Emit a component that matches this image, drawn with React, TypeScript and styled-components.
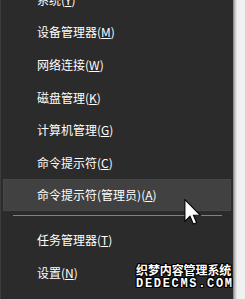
import React from 'react';
import styled, { createGlobalStyle } from 'styled-components';

const GlobalStyle = createGlobalStyle`
  html, body {
    margin: 0;
    padding: 0;
    background: #f0f0f0;
    overflow: hidden;
  }
  body {
    font-family: "Noto Sans CJK SC", "Noto Sans", sans-serif;
  }
`;

const Screen = styled.div`
  position: relative;
  width: 245px;
  height: 299px;
  overflow: hidden;
  background: #f0f0f0;
`;

const Menu = styled.div`
  width: 232px;
  margin-top: -17px;
  padding: 0 0 40px 0;
  background: #2b2b2b;
  border-left: 1px solid #3c3c3c;
  border-right: 1px solid #8e8e8e;
  box-shadow: 1px 0 0 #b4b4b4, 2px 0 0 #cdcdcd, 3px 0 0 #e1e1e1;
  display: flex;
  flex-direction: column;
`;

const Item = styled.div<{ $active?: boolean }>`
  height: 32.6px;
  box-sizing: border-box;
  margin: 0 2px 0 2px;
  padding-left: 33px;
  display: flex;
  align-items: center;
  color: #ffffff;
  font-size: 12px;
  white-space: nowrap;
  background: ${(p) => (p.$active ? '#414141' : 'transparent')};
  border: 1px solid ${(p) => (p.$active ? '#474747' : 'transparent')};
`;

const Key = styled.span`
  text-decoration: underline;
  text-underline-offset: 1px;
`;

const Separator = styled.div`
  height: 12.4px;
  display: flex;
  padding: 4px 11px 0 12px;
  box-sizing: border-box;
  &::before {
    content: '';
    flex: 1;
    height: 1px;
    background: #828282;
  }
`;

const Cursor = styled.svg`
  position: absolute;
  left: 184px;
  top: 199px;
`;

const Watermark = styled.div`
  position: absolute;
  left: 136px;
  top: 264px;
  width: 97px;
  color: #ffffff;
  font-weight: bold;
  text-shadow: 1px 0 0 #000, -1px 0 0 #000, 0 1px 0 #000, 0 -1px 0 #000,
    1px 1px 0 #000, -1px -1px 0 #000, 1px -1px 0 #000, -1px 1px 0 #000;
  display: flex;
  flex-direction: column;
  line-height: 1;
`;

const MarkTitle = styled.span`
  font-size: 12px;
  letter-spacing: -0.1px;
`;

const MarkSite = styled.div`
  display: flex;
  justify-content: space-between;
  font-family: "Liberation Mono", "DejaVu Sans Mono", monospace;
  font-size: 12px;
  margin-top: 2px;
  padding-right: 1px;
`;

const topItems = [
  ['系统', 'Y'],
  ['设备管理器', 'M'],
  ['网络连接', 'W'],
  ['磁盘管理', 'K'],
  ['计算机管理', 'G'],
  ['命令提示符', 'C'],
  ['命令提示符(管理员)', 'A'],
];

const bottomItems = [
  ['任务管理器', 'T'],
  ['设置', 'N'],
  ['文件资源管理器', 'E'],
];

const App = () => (
  <Screen>
    <GlobalStyle />
    <Menu>
      {topItems.map(([label, key], i) => (
        <Item key={label} $active={i === topItems.length - 1}>
          {label}(<Key>{key}</Key>)
        </Item>
      ))}
      <Separator />
      {bottomItems.map(([label, key]) => (
        <Item key={label}>
          {label}(<Key>{key}</Key>)
        </Item>
      ))}
    </Menu>
    <Watermark>
      <MarkTitle>织梦内容管理系统</MarkTitle>
      <MarkSite>
        {'DEDECMS.COM'.split('').map((c, i) => (
          <span key={i}>{c}</span>
        ))}
      </MarkSite>
    </Watermark>
    <Cursor width="18" height="27" viewBox="0 0 13 20">
      <path
        d="M0.5 0.5 L0.5 16.5 L4.3 12.8 L6.8 18.6 L9.2 17.6 L6.8 12 L11.8 12 Z"
        fill="#ffffff"
        stroke="#000000"
        strokeWidth="0.8"
        strokeLinejoin="miter"
      />
    </Cursor>
  </Screen>
);

export default App;
